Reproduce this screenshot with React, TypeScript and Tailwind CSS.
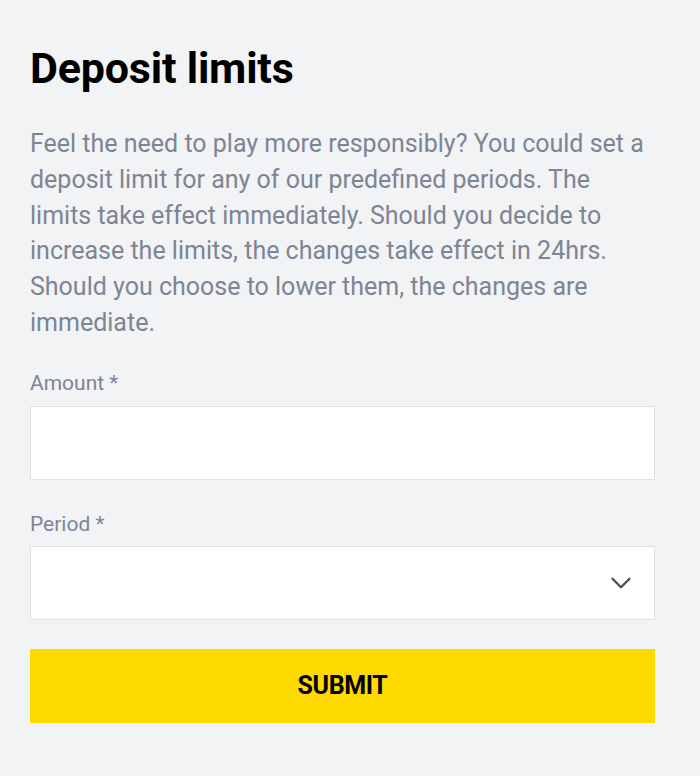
import { ChevronDown } from "lucide-react";

const App = () => {
    return (
        <div className="min-h-screen bg-[#f2f3f5] font-['Roboto',sans-serif]">
            <div className="w-[625px] ml-[30px] pt-[40px] pb-[50px]">
                <h1 className="text-[43px] leading-[56px] font-bold text-black tracking-[-0.2px]">
                    Deposit limits
                </h1>

                <p className="mt-[30px] text-[25px] leading-[35.8px] text-[#7c8594]">
                    Feel the need to play more responsibly? You could set a deposit limit for any of our predefined
                    periods. The limits take effect immediately. Should you decide to increase the limits, the changes
                    take effect in 24hrs. Should you choose to lower them, the changes are immediate.
                </p>

                <form className="mt-[28px] flex flex-col">
                    <label className="text-[21px] leading-[28px] text-[#7c8594]">Amount *</label>
                    <input
                        type="text"
                        className="mt-[9px] h-[74px] bg-white border border-[#dfe1e5] px-4 text-[20px] outline-none"
                    />

                    <label className="mt-[30px] text-[21px] leading-[28px] text-[#7c8594]">Period *</label>
                    <div className="relative mt-[8px]">
                        <select className="w-full h-[74px] bg-white border border-[#dfe1e5] px-4 text-[20px] outline-none appearance-none">
                            <option value=""></option>
                        </select>
                        <ChevronDown
                            className="absolute right-[17px] top-1/2 -translate-y-1/2 text-[#4b4f58] pointer-events-none"
                            size={34}
                            strokeWidth={1.7}
                        />
                    </div>

                    <button
                        type="button"
                        className="mt-[29px] h-[74px] bg-[#ffda00] text-black text-[25px] font-bold tracking-[-0.4px]"
                    >
                        SUBMIT
                    </button>
                </form>
            </div>
        </div>
    );
};

export default App;
